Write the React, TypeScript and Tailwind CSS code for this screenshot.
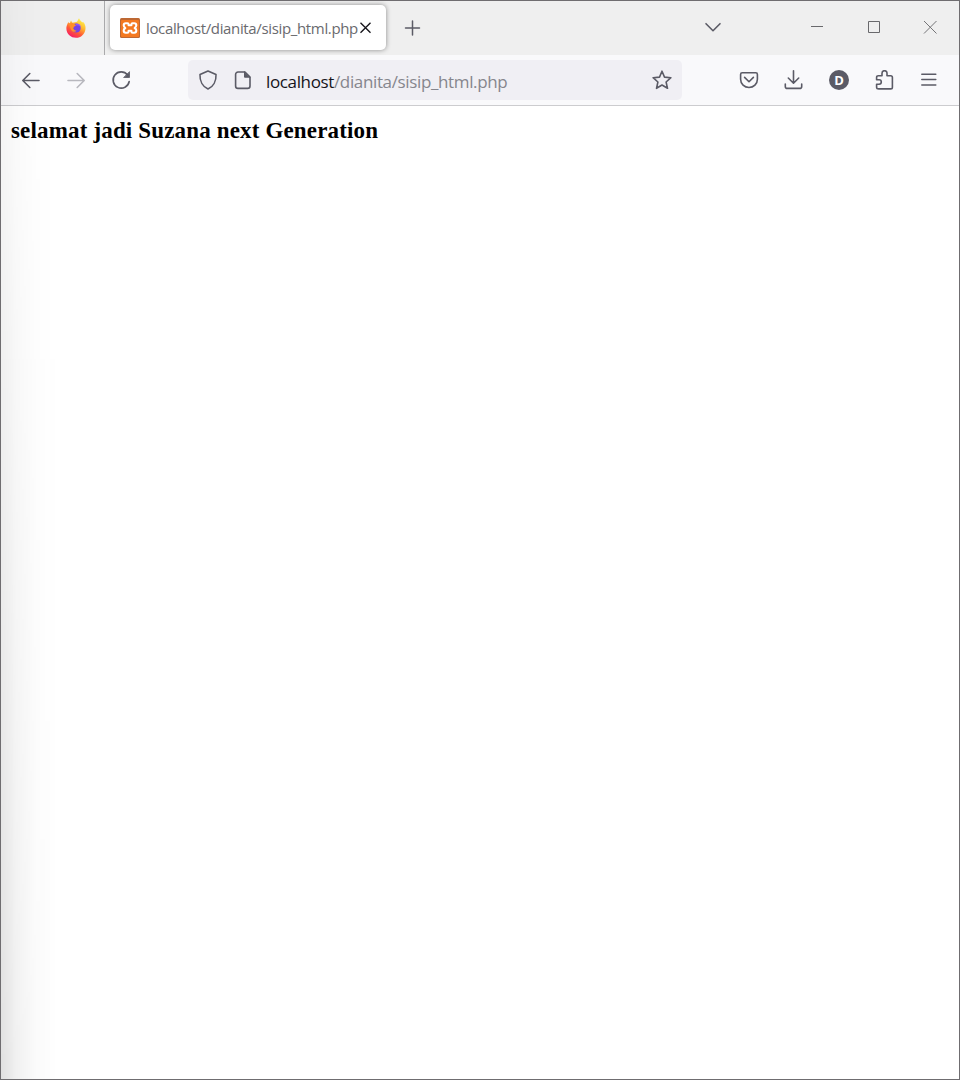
import React from "react";

type IconProps = { className?: string; children: React.ReactNode; width?: number };

function Icon({ className = "", children, width = 1.6 }: IconProps) {
  return (
    <svg
      viewBox="0 0 20 20"
      className={`block h-5 w-5 shrink-0 text-[#5b5b66] ${className}`}
      fill="none"
      stroke="currentColor"
      strokeWidth={width}
      strokeLinecap="round"
      strokeLinejoin="round"
    >
      {children}
    </svg>
  );
}

function FirefoxLogo() {
  return (
    <svg viewBox="0 0 20 20" className="-mt-px ml-[65px] block h-5 w-5 shrink-0">
      <defs>
        <linearGradient id="fox" x1="0.8" y1="0.05" x2="0.25" y2="1">
          <stop offset="0" stopColor="#fff44f" />
          <stop offset="0.35" stopColor="#ffb62e" />
          <stop offset="0.65" stopColor="#ff5a36" />
          <stop offset="1" stopColor="#f5156c" />
        </linearGradient>
      </defs>
      <path
        d="M2.2 4.2 3.8 5.2 5 2.5 6.2 4.8 9 4.3 11 3.8 13 .3C13.7 2.2 15 3.3 16.3 4.3L17.5 4.3C19.1 6.3 19.8 8.4 19.5 11 19 16.2 15 19.8 10 19.8 4.9 19.8.6 16 .4 11 .2 8.8 1 6.4 2.2 4.2Z"
        fill="url(#fox)"
      />
      <circle cx="10.2" cy="10.1" r="4.5" fill="#7542e5" />
      <path d="M10 5.8c2.2-.6 4.6.6 5 3.2l-2.4-1.5-3-.2Z" fill="#9059ff" />
      <path d="M3.2 6.1 6.2 4.8 9 6.6 10 7.6 8 8.8 7.2 10.6 8.6 12.2 10.6 12.8C9.2 14.6 5.5 14 4.6 10.7Z" fill="#ff8f2a" />
    </svg>
  );
}

function XamppLogo() {
  return (
    <svg viewBox="0 0 20 20" className="block h-5 w-5 shrink-0">
      <rect width="20" height="20" rx="1.5" fill="#bd6833" />
      <rect x="1" y="2" width="18" height="17" rx="1" fill="#f47920" />
      <path
        d="M5.8 5.2h1.6c.8 0 1.2.5 1.2 1.3v.8h2.8v-.8c0-.8.4-1.3 1.2-1.3h1.6c1.3 0 2.1.9 2.1 2.1 0 1.1-.6 1.9-1.6 2.7 1 .6 1.6 1.4 1.6 2.6 0 1.3-.8 2.2-2.1 2.2h-1.6c-.8 0-1.2-.5-1.2-1.3v-.8H8.6v.8c0 .8-.4 1.3-1.2 1.3H5.8c-1.3 0-2.1-.9-2.1-2.2 0-1.2.6-2 1.6-2.6-1-.8-1.6-1.6-1.6-2.7 0-1.2.8-2.1 2.1-2.1Z"
        fill="none"
        stroke="white"
        strokeWidth="2.1"
        strokeLinejoin="round"
      />
    </svg>
  );
}

function TabStrip() {
  return (
    <div className="flex h-[54px] shrink-0 items-start bg-[#efefef]">
      <div className="flex h-full w-[104px] shrink-0 items-center border-r border-[#aaaaac]">
        <FirefoxLogo />
      </div>
      <div className="ml-[5px] mt-1 flex h-[45px] w-[276px] shrink-0 items-center rounded-[5px] bg-white pl-2.5 shadow-[0_0_5px_rgba(0,0,0,0.42)]">
        <XamppLogo />
        <span className="ml-1.5 block w-[212px] shrink-0 whitespace-nowrap font-['Open_Sans',sans-serif] text-[15px] leading-5 tracking-[-0.35px] text-[#6a6a6e]">
          localhost/dianita/sisip_html.php
        </span>
        <svg viewBox="0 0 14 14" className="ml-px block h-3.5 w-3.5 shrink-0" fill="none" stroke="#15141a" strokeWidth="1.35">
          <path d="m1.5 1.7 10 10M11.5 1.7l-10 10" />
        </svg>
      </div>
      <Icon className="ml-[16px] mt-[17px]" width={1.5}>
        <path d="M10.5 3v14M3.5 10h14" />
      </Icon>
      <Icon className="ml-[281px] mt-[16px]">
        <path d="m3 6.7 7 7 7-7" />
      </Icon>
      <svg viewBox="0 0 20 20" className="ml-[84px] mt-[16px] block h-5 w-5 shrink-0" fill="none" stroke="#69696c">
        <path d="M4 9.5h12" />
      </svg>
      <svg viewBox="0 0 20 20" className="ml-[36px] mt-[16px] block h-5 w-5 shrink-0" fill="none" stroke="#69696c">
        <path d="M5.5 4.5h11v11h-11Z" />
      </svg>
      <svg viewBox="0 0 20 20" className="ml-[37px] mt-[16px] block h-5 w-5 shrink-0" fill="none" stroke="#747477">
        <path d="m4 4 12.5 12.5M16.5 4 4 16.5" />
      </svg>
    </div>
  );
}

function Toolbar() {
  return (
    <div className="flex h-[51px] shrink-0 items-center border-b border-[#cccccf] bg-[#f9f9fb]">
      <Icon className="ml-5">
        <path d="M18 10.5H2m6.8-7L1.8 10.5l7 7" />
      </Icon>
      <Icon className="ml-[25px] text-[#b8b8be]">
        <path d="M2 10.5h16m-6.8-7 7 7-7 7" />
      </Icon>
      <Icon className="ml-[25px]">
        <path d="M16.6 5A8.1 8.1 0 1 0 18.2 11.5" />
        <path d="M18.5 2v5.5H13Z" fill="currentColor" strokeWidth="0.8" />
      </Icon>
      <div className="ml-[57px] flex h-10 w-[494px] shrink-0 items-center rounded-[5px] bg-[#f0eff4]">
        <Icon className="ml-[10px]">
          <path d="M10 1.1 18 4.6C18.4 11 15.2 16.6 10 19 4.8 16.6 1.6 11 2 4.6Z" />
        </Icon>
        <Icon className="ml-[15px]">
          <path d="M5 2h7l5 5v9a2.4 2.4 0 0 1-2.4 2.4H5A2.4 2.4 0 0 1 2.6 16V4.4A2.4 2.4 0 0 1 5 2Z" />
          <path d="M11.5 2v5.2h5.2Z" fill="currentColor" strokeWidth="1" />
        </Icon>
        <span className="ml-[13px] mt-1 block w-[386px] shrink-0 whitespace-nowrap font-['Open_Sans',sans-serif] text-[17px] leading-6 tracking-[-0.36px] text-[#86868d]">
          <span className="text-[#15141a]">localhost</span>/dianita/sisip_html.php
        </span>
        <Icon>
          <path d="m10 1.2 2.5 5.9 6.4.6-4.8 4.3 1.4 6.3-5.5-3.3-5.5 3.3L5.9 12 1.1 7.7l6.4-.6Z" />
        </Icon>
      </div>
      <Icon className="ml-[57px]">
        <path d="M3.2 2.8h13.6c1 0 1.6.6 1.6 1.6v4.8c0 4.8-3.8 8.3-8.4 8.3s-8.4-3.5-8.4-8.3V4.4c0-1 .6-1.6 1.6-1.6Z" />
        <path d="m5.6 7.4 4.4 4.3 4.4-4.3" />
      </Icon>
      <Icon className="ml-[25px]">
        <path d="M9.5.8v12M4.3 8l5.2 5.2L14.7 8M1.3 14v2.4c0 1.2.8 2 2 2h12.4c1.2 0 2-.8 2-2V14" />
      </Icon>
      <div className="ml-[25px] flex h-5 w-5 shrink-0 items-center justify-center rounded-full bg-[#5b5b66] font-['Open_Sans',sans-serif] text-[13px] font-bold leading-5 text-white">
        D
      </div>
      <Icon className="ml-[25px]">
        <path d="M4.8 18.9h11.9c1 0 1.7-.7 1.7-1.7V7.4c0-1-.7-1.7-1.7-1.7H13V3.2a2.5 2.5 0 0 0-5 0v2.5H4.3c-1 0-1.7.7-1.7 1.7v2.4h2.5a2.2 2.2 0 0 1 0 4.4H2.6v3c0 1 .7 1.7 2.2 1.7Z" />
      </Icon>
      <Icon className="ml-[25px]" width={1.5}>
        <path d="M2.8 4.2h14M2.8 9.6h14M2.8 15h14" />
      </Icon>
    </div>
  );
}

export default function App() {
  return (
    <div className="relative flex h-[1080px] w-[960px] flex-col overflow-hidden border border-[#6f6d70] bg-white">
      <TabStrip />
      <Toolbar />
      <main className="grow pl-[10px] pt-[12px]">
        <h3 className="w-max whitespace-nowrap font-['Liberation_Serif',serif] text-[23px] font-bold leading-[26px] tracking-[0.16px] text-black">
          selamat jadi Suzana next Generation
        </h3>
      </main>
      <div className="pointer-events-none absolute inset-y-0 left-0 w-14 bg-[linear-gradient(to_right,rgba(0,0,0,0.12),rgba(0,0,0,0.055)_28%,rgba(0,0,0,0.015)_65%,transparent)] [mask-image:linear-gradient(to_bottom,rgba(0,0,0,0.25),black)]" />
    </div>
  );
}
